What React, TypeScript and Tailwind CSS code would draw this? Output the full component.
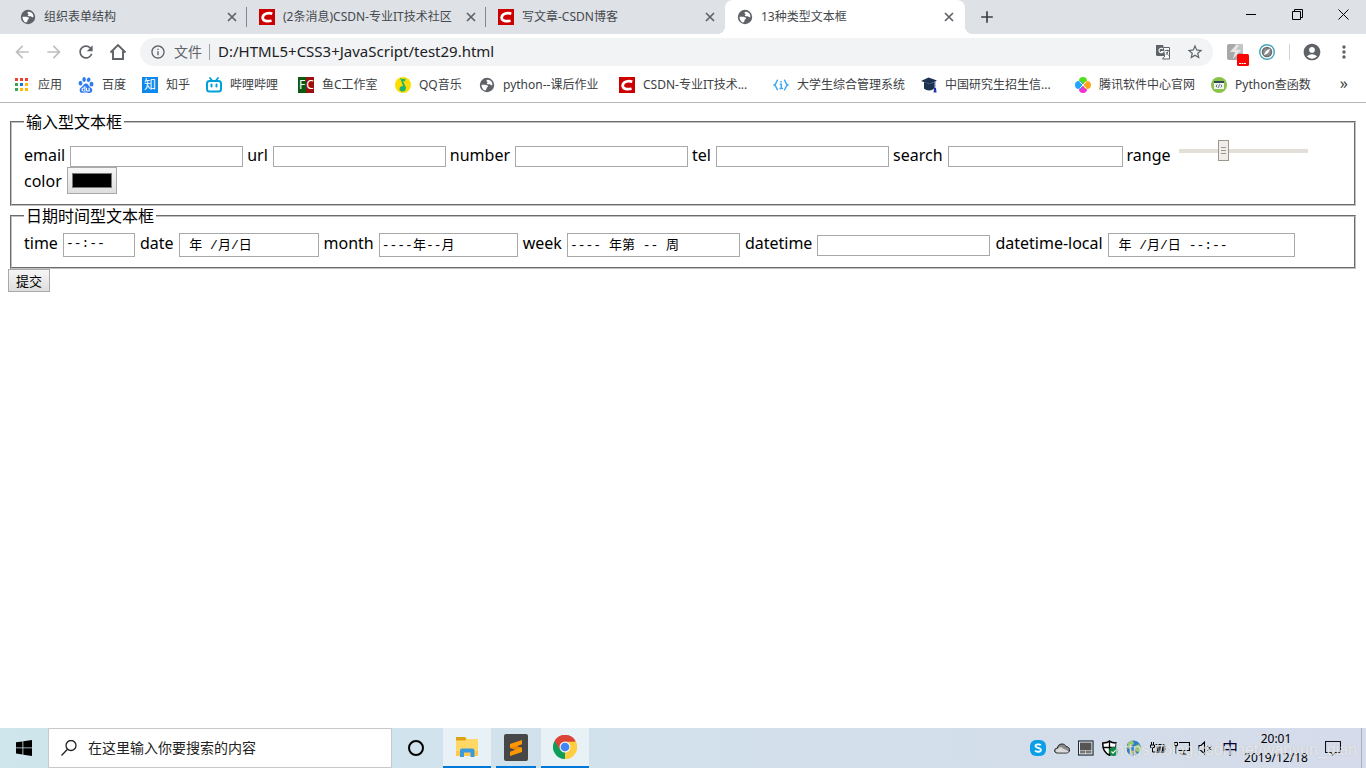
import { useState } from 'react';
import type { ReactNode } from 'react';
import { MdAccountCircle, MdAdd, MdArrowBack, MdArrowForward, MdInfoOutline, MdMoreVert, MdRefresh, MdStarBorder } from 'react-icons/md';
import { SiBaidu } from 'react-icons/si';

/* ---------- icons ---------- */

const GlobeIcon = () => (
  <svg className="size-4 shrink-0" viewBox="0 0 16 16">
    <circle cx="8" cy="8" r="7.2" fill="#5f6368" />
    <path d="M2.500 7.800h3.300c1 0 1.500.6 2.500.6s1 1 .2 1.600-1 1-1 1.800-.8 1.700-1.700 1.700C3.800 12.800 2.500 10.500 2.500 7.800zM8.500 2.800c1.800-.2 3.300.8 4.200 2.200.5.900.8 2 .7 3-.8.5-1.700.2-2.200-.4-.6-.7-1.500-.2-2.500-.3-1-.1-1.200-1.300-.4-1.700.6-.3.600-.8-.2-.9-.9-.1-1-1.500.4-1.900z" fill="#fff" />
  </svg>
);

const CsdnIcon = () => (
  <svg className="size-4 shrink-0" viewBox="0 0 16 16">
    <rect width="16" height="16" fill="#c00" />
    <path d="M13.300 4.700C10 3.700 4.300 4 3.700 8.200c-.5 4.200 5 4.400 8.900 3.500" fill="none" stroke="#fff" strokeWidth="2.700" />
  </svg>
);

const AppsIcon = () => (
  <svg className="size-4 shrink-0" viewBox="0 0 16 16">
    <path d="M1 1h3v3H1zM6 1h3v3H6zM11 1h3v3h-3z" fill="#ea4335" />
    <path d="M1 6h3v3H1zM1 11h3v3H1z" fill="#34a853" />
    <path d="M6 6h3v3H6z" fill="#1a73e8" />
    <path d="M11 6h3v3h-3zM6 11h3v3H6zM11 11h3v3h-3z" fill="#fbbc04" />
  </svg>
);

const ZhihuIcon = () => (
  <span className="flex size-4 shrink-0 items-center justify-center bg-[#0f88eb] text-xs leading-4 text-white">知</span>
);

const BilibiliIcon = () => (
  <svg className="size-4 shrink-0" viewBox="0 0 16 16" fill="none" stroke="#00a1d6" strokeWidth="2">
    <rect x="1" y="4" width="14" height="10.500" rx="2.500" />
    <path d="M4 1l2 2.500M12 1l-2 2.500" strokeWidth="1.800" strokeLinecap="round" />
    <path d="M5.500 7.500v2M10.500 7.500v2" strokeLinecap="round" />
  </svg>
);

const FishcIcon = () => (
  <span className="flex h-4 w-4 shrink-0 bg-[linear-gradient(90deg,#0c5a12_50%,#9c0f0f_50%)] text-xs leading-4 text-white">
    <span className="w-2 text-center">F</span>
    <span className="w-2 text-center">C</span>
  </span>
);

const QQMusicIcon = () => (
  <svg className="size-4 shrink-0" viewBox="0 0 16 16">
    <circle cx="8" cy="8" r="8" fill="#ffdc00" />
    <path d="M5 1c1.500.8 3.700 1.200 5.700.8L10 4.300c-.9 0-1.500-.1-2-.2l2.800 6c.8 2.600-.9 4.500-3 4.500s-3.600-1.400-3.300-3.200c.2-1.700 1.900-2.600 3.600-2.400z" fill="#1fb46f" />
  </svg>
);

const BracketIcon = () => (
  <svg className="size-4 shrink-0" viewBox="0 0 16 16" fill="none" stroke="#3da9f5" strokeWidth="1.500">
    <path d="M5 3C3 3.500 3.800 7 1.300 8 3.800 9 3 12.500 5 13M11 3c2 .5 1.200 4 3.700 5-2.500 1-1.700 4.500-3.700 5" />
    <path d="M6.800 7.200h1.500v4.300M6.500 11.500h3.500M7.300 4.700h1.500" />
  </svg>
);

const GraduationIcon = () => (
  <svg className="size-4 shrink-0" viewBox="0 0 16 16">
    <path d="M0 4l7.500-3.500L16 3.500 8.500 7z" fill="#1b3350" />
    <path d="M3 5l5.500 2 4.500-2v6.500c-1.700 2.400-7.500 2.800-10 0z" fill="#1b3350" />
    <path d="M13.800 4v8" stroke="#25368c" />
    <path d="M13 11h2l.6 4.500h-3z" fill="#2432b0" />
  </svg>
);

const TencentIcon = () => (
  <svg className="size-4 shrink-0" viewBox="0 0 16 16">
    <circle cx="8" cy="4" r="4" fill="#52e01e" />
    <circle cx="8" cy="12" r="4" fill="#f032d8" />
    <circle cx="3.900" cy="8" r="3.900" fill="#24a4ff" />
    <circle cx="12.100" cy="8" r="3.900" fill="#ffa41c" />
    <path d="M4.500 4.500l7 7M11.500 4.500l-7 7" stroke="#fff" />
  </svg>
);

const PythonDocIcon = () => (
  <svg className="size-4 shrink-0" viewBox="0 0 16 16">
    <circle cx="8" cy="8" r="8" fill="#8bc34a" />
    <rect x="3" y="4" width="10" height="8" fill="#f5f5f5" />
    <rect x="3" y="4" width="10" height="2" fill="#2e4a54" />
    <path d="M6.300 7.500L5 9l1.300 1.500M9.700 7.500L11 9l-1.300 1.500M8.500 7.300l-1 3.400" fill="none" stroke="#2e4a54" strokeWidth=".8" />
  </svg>
);

const HomeIcon = () => (
  <svg className="size-5" viewBox="0 0 20 20">
    <path d="M2.500 10.500L10 3l7.500 7.500M5 9v8h10V9" fill="none" stroke="currentColor" strokeWidth="1.900" />
  </svg>
);

const TranslateIcon = () => (
  <svg className="size-4" viewBox="0 0 16 16">
    <path d="M1 1h7l3.500 11H2.500A1.500 1.500 0 011 10.500z" fill="#5f6368" />
    <path d="M9 3.500h5.500V15H7.500l2.500-3" fill="#fff" stroke="#5f6368" />
    <path d="M8 5.200a2.200 2.200 0 10.200 2.300H6" fill="none" stroke="#fff" strokeWidth="1.100" />
    <path d="M10 6.500h4M12 5.500v1M13.200 6.500c-.3 2-1.500 3.500-2.500 4.500M11 8l2.500 3.500" fill="none" stroke="#5f6368" strokeWidth=".9" />
  </svg>
);

const FlashExtensionIcon = () => (
  <svg className="size-8" viewBox="0 0 32 32">
    <rect x="8" y="8" width="16" height="16" rx="2" fill="#a8a8a8" />
    <path d="M16 8h6a2 2 0 012 2v7h-8z" fill="#c4c4c4" />
    <path d="M17 9l-6 7h5l-2 7 8-9h-5l3-5z" fill="#e6e6e6" />
    <rect x="18" y="18" width="12" height="12" rx="1.500" fill="#f00" />
    <path d="M20 27.500h7" stroke="#fff" strokeDasharray="2 .5" />
  </svg>
);

const CompassExtensionIcon = () => (
  <svg className="size-4" viewBox="0 0 16 16">
    <circle cx="8" cy="8" r="7.300" fill="#fff" stroke="#45a5b8" strokeWidth="1.400" />
    <circle cx="8" cy="8" r="5.300" fill="#6c6c6c" />
    <circle cx="8" cy="8" r="3.800" fill="#909090" />
    <path d="M11.500 4.500L9 9l-4.500 2.500L7 7z" fill="#fff" />
  </svg>
);

const WindowsIcon = () => (
  <svg className="size-4" viewBox="0 0 16 16">
    <path d="M0 2.300l6.500-.9v6.100H0zM7.300 1.300L16 0v7.500H7.300zM0 8.300h6.500v6.200L0 13.600zM7.300 8.300H16V16l-8.700-1.300z" />
  </svg>
);

const SearchIcon = () => (
  <svg className="size-4" viewBox="0 0 16 16" fill="none" stroke="#222" strokeWidth="1.300">
    <circle cx="10" cy="5.500" r="5" />
    <path d="M6.500 9.300L.5 15.500" />
  </svg>
);

const FolderIcon = () => (
  <svg className="h-5 w-[22px]" viewBox="0 0 22 20">
    <path d="M0 0h9l1.500 2H22v17H0z" fill="#ffd868" />
    <path d="M0 0h9l1.500 2L9 3.500H0z" fill="#dba215" />
    <path d="M0 14h22v5H0z" fill="#ffc94d" />
    <path d="M4 20v-6.500a2 2 0 012-2h10.500a2 2 0 012 2V20h-4v-4.500H8V20z" fill="#3b9ade" />
  </svg>
);

const SublimeIcon = () => (
  <svg className="h-[27px] w-6" viewBox="0 0 24 27">
    <rect width="24" height="27" rx="2" fill="#474747" />
    <path d="M18 6v4.200l-5.500 2 5.500 1.600V18L6 22v-4.200l5.500-2L6 14v-4z" fill="#ff9800" />
    <path d="M6 13.500l5.500 2.300 6.500-2-5.500-1.600z" fill="#e88600" />
  </svg>
);

const ChromeIcon = () => (
  <svg className="size-6" viewBox="0 0 24 24">
    <path d="M12 12L1.600 6A12 12 0 0122.400 6z" fill="#db4437" />
    <path d="M12 12l10.400-6A12 12 0 0112 24z" fill="#ffcd40" />
    <path d="M12 12v12A12 12 0 011.600 6z" fill="#0f9d58" />
    <path d="M12 6.500h10.700A12 12 0 0112 24l4.800-9.200z" fill="#ffcd40" />
    <path d="M1.600 6A12 12 0 0122.700 6.500H12L7.200 14.800z" fill="#db4437" />
    <circle cx="12" cy="12" r="5.500" fill="#f1f1f1" />
    <circle cx="12" cy="12" r="4.300" fill="#4285f4" />
  </svg>
);

const trayIcons: { name: string; icon: ReactNode }[] = [
  {
    name: 'Skype',
    icon: (
      <>
        <rect width="16" height="16" rx="6" fill="#0a9fe6" />
        <path d="M10.800 5.300C9.800 3.900 5.500 3.900 5.500 6.100c0 2.400 5.400 1.300 5.400 3.900 0 2.200-4.600 2.300-5.800.5" fill="none" stroke="#fff" strokeWidth="1.800" />
      </>
    ),
  },
  {
    name: 'OneDrive',
    icon: (
      <>
        <path d="M3.500 13C.5 13 0 10.500 1 9.200c.6-.8 1.600-1 2.300-.9C3.800 5.500 5.500 4 8 4c2 0 3.400 1 4 2.600 2.200 0 3.600 1.500 3.600 3.200S14.300 13 12.500 13z" fill="#8b8b8b" stroke="#222" />
        <path d="M4 12.500c-3 0-3-3.500 0-3.700C5.500 6.500 8 7 9 8.500l5.500 2.800c-.3.800-1 1.200-2 1.200z" fill="#dadada" />
      </>
    ),
  },
  {
    name: 'Touchpad',
    icon: (
      <>
        <rect x=".5" y="1" width="14.500" height="14" fill="#fff" stroke="#1b2a38" strokeWidth="1.200" />
        <path d="M2 2.500h11.500v7.700H2z" fill="#555" />
        <path d="M2 10.500h5.500v3H2zM8 10.500h5.500v3H8z" fill="#777" />
      </>
    ),
  },
  {
    name: 'Security',
    icon: (
      <>
        <path d="M7.500 1C6 2.500 3 3 .8 3c-.3 6 1.700 10 6.700 12.300C12.500 13 14.500 9 14.200 3 12 3 9 2.500 7.500 1z" fill="#fff" stroke="#000" strokeWidth="1.500" />
        <path d="M7.500 1v14M1 7.500h13" stroke="#000" strokeWidth="1.300" />
        <circle cx="11.500" cy="11.500" r="4.500" fill="#10893e" />
        <path d="M9.500 11.500l1.500 1.600 2.700-3" fill="none" stroke="#fff" strokeWidth="1.200" />
      </>
    ),
  },
  {
    name: 'Network globe',
    icon: (
      <>
        <circle cx="7.500" cy="8" r="7.500" fill="#2d7fc8" />
        <path d="M2 3c2-2 4-2.500 5-2l1 3-3 2-1 3-3-1zM9 6l4-2 2 4-2 5-3-2z" fill="#9cc86a" />
        <path d="M4 10l4 1-1 4-3-2z" fill="#d6c04c" />
      </>
    ),
  },
  {
    name: 'Battery',
    icon: (
      <>
        <path d="M5.500 4.500h9v7.500H5M15.500 6.500v3.500" fill="none" stroke="#000" strokeWidth="1.200" />
        <path d="M6.500 6.500h2V11h-2zM9.300 6.500h2V11h-2zM12 6.500h1.700V11H12z" fill="#000" />
        <path d="M1.500 2v3M3.500 2v3M.5 5h4v2.500h-4zM2.500 7.500V12H5" fill="none" stroke="#000" />
      </>
    ),
  },
  {
    name: 'Ethernet',
    icon: (
      <>
        <path d="M5 2.500h10.500v8H4.500M9.500 10.500v3M6 14h7" fill="none" stroke="#000" strokeWidth="1.200" />
        <path d="M.5 2.500h3v3h-3zM2 5.500v8" fill="none" stroke="#000" />
      </>
    ),
  },
  {
    name: 'Volume',
    icon: (
      <path d="M1 5.500h2L6.500 2v12L3 10.500H1zM9.500 6l4 4.500M13.500 6l-4 4.500" fill="none" stroke="#000" strokeWidth="1.100" />
    ),
  },
];

/* ---------- browser window ---------- */

const tabs = [
  { title: '组织表单结构', icon: <GlobeIcon />, divider: true },
  { title: '(2条消息)CSDN-专业IT技术社区', icon: <CsdnIcon />, divider: true },
  { title: '写文章-CSDN博客', icon: <CsdnIcon />, divider: false },
];

const bookmarks = [
  { title: '应用', icon: <AppsIcon />, width: 'w-16' },
  { title: '百度', icon: <SiBaidu className="size-4 shrink-0 text-[#2f7bf0]" />, width: 'w-16' },
  { title: '知乎', icon: <ZhihuIcon />, width: 'w-16' },
  { title: '哔哩哔哩', icon: <BilibiliIcon />, width: 'w-[92px]' },
  { title: '鱼C工作室', icon: <FishcIcon />, width: 'w-[97px]' },
  { title: 'QQ音乐', icon: <QQMusicIcon />, width: 'w-[84px]' },
  { title: 'python--课后作业', icon: <GlobeIcon />, width: 'w-[140px]' },
  { title: 'CSDN-专业IT技术...', icon: <CsdnIcon />, width: 'w-[154px]' },
  { title: '大学生综合管理系统', icon: <BracketIcon />, width: 'w-[148px]' },
  { title: '中国研究生招生信...', icon: <GraduationIcon />, width: 'w-[154px]' },
  { title: '腾讯软件中心官网', icon: <TencentIcon />, width: 'w-[136px]' },
  { title: 'Python查函数', icon: <PythonDocIcon />, width: 'w-[104px]' },
];

function CloseTab() {
  return (
    <button type="button" aria-label="关闭标签页" className="flex size-4 shrink-0 items-center justify-center text-[#5f6368]">
      <svg className="size-2.5" viewBox="0 0 10 10"><path d="M1 1l8 8M9 1L1 9" stroke="currentColor" strokeWidth="1.700" /></svg>
    </button>
  );
}

function TabStrip() {
  return (
    <div className="flex h-[34px] bg-[#dee1e6] pl-2 text-xs text-[#45494d]">
      {tabs.map((tab) => (
        <div key={tab.title} className="flex w-[239px] items-center pl-3">
          {tab.icon}
          <span className="ml-2 flex-1 truncate">{tab.title}</span>
          <CloseTab />
          <span className={`ml-1.5 h-5 w-px ${tab.divider ? 'bg-[#80868b]' : ''}`} />
        </div>
      ))}
      <div className="relative flex w-60 items-center rounded-t-lg bg-white pr-2 pl-3">
        <span className="absolute bottom-0 -left-2 size-2 bg-[radial-gradient(circle_at_0_0,#dee1e6_8px,white_8px)]" />
        <span className="absolute -right-2 bottom-0 size-2 bg-[radial-gradient(circle_at_100%_0,#dee1e6_8px,white_8px)]" />
        <GlobeIcon />
        <span className="ml-2 flex-1 truncate">13种类型文本框</span>
        <CloseTab />
      </div>
      <button type="button" aria-label="新标签页" className="ml-3 flex w-5 items-center justify-center text-[#3c4043]">
        <MdAdd className="size-5" />
      </button>
      <div className="ml-auto flex h-7 text-black">
        <button type="button" aria-label="最小化" className="flex w-[46px] items-center justify-center">
          <svg className="size-[11px]" viewBox="0 0 11 11"><path d="M0 5.500h10" stroke="currentColor" /></svg>
        </button>
        <button type="button" aria-label="还原" className="flex w-[46px] items-center justify-center">
          <svg className="size-[11px]" viewBox="0 0 11 11" fill="none" stroke="currentColor">
            <path d="M.5 2.500h8v8h-8zM2.500 2.500v-2h8v8h-2" />
          </svg>
        </button>
        <button type="button" aria-label="关闭" className="flex w-[46px] items-center justify-center">
          <svg className="size-[11px]" viewBox="0 0 11 11"><path d="M.5.5l10 10M10.500.5l-10 10" stroke="currentColor" /></svg>
        </button>
      </div>
    </div>
  );
}

function ToolButton({ label, children }: { label: string; children: ReactNode }) {
  return (
    <button type="button" aria-label={label} className="flex w-8 shrink-0 items-center justify-center">
      {children}
    </button>
  );
}

function Toolbar() {
  return (
    <div className="flex h-9 items-stretch bg-white px-1.5 text-[#5f6368]">
      <ToolButton label="后退"><MdArrowBack className="size-5 text-[#bdbfc1]" /></ToolButton>
      <ToolButton label="前进"><MdArrowForward className="size-5 text-[#bdbfc1]" /></ToolButton>
      <ToolButton label="重新加载"><MdRefresh className="size-5" /></ToolButton>
      <ToolButton label="主页"><HomeIcon /></ToolButton>
      <div className="my-1 ml-1.5 flex flex-1 items-center rounded-full bg-[#f1f3f4] pr-0.5 pl-2.5 text-sm">
        <MdInfoOutline className="size-4" />
        <span className="ml-2">文件</span>
        <span className="ml-[7px] h-4 w-px bg-[#9aa0a6]" />
        <input
          aria-label="地址"
          defaultValue="D:/HTML5+CSS3+JavaScript/test29.html"
          className="ml-2 flex-1 bg-transparent text-[15px] text-[#202124] outline-none"
        />
        <ToolButton label="翻译此页"><TranslateIcon /></ToolButton>
        <ToolButton label="为此标签页添加书签"><MdStarBorder className="size-[18px]" /></ToolButton>
      </div>
      <div className="ml-1.5 flex">
        <ToolButton label="Flash"><FlashExtensionIcon /></ToolButton>
        <ToolButton label="Compass"><CompassExtensionIcon /></ToolButton>
        <span className="mx-1.5 h-4 w-px self-center bg-[#d0d2d5]" />
        <ToolButton label="用户"><MdAccountCircle className="size-5" /></ToolButton>
        <ToolButton label="更多"><MdMoreVert className="size-5" /></ToolButton>
      </div>
    </div>
  );
}

function BookmarkBar() {
  return (
    <nav className="flex h-[33px] items-center overflow-hidden border-b border-[#b6b6b6] bg-white pb-0.5 pl-3.5 text-xs text-[#3c4043]">
      {bookmarks.map((bookmark) => (
        <a key={bookmark.title} href="#" className={`flex shrink-0 items-center gap-2 whitespace-nowrap ${bookmark.width}`}>
          {bookmark.icon}
          {bookmark.title}
        </a>
      ))}
      <button type="button" aria-label="更多书签" className="mr-[18px] ml-auto pb-1 text-base leading-4">»</button>
    </nav>
  );
}

/* ---------- page ---------- */

function Field({ label, type = 'text', value, className }: { label: string; type?: string; value?: string; className: string }) {
  return (
    <label className="flex items-center gap-[5px]">
      <span className="pb-1 leading-4">{label}</span>
      <input
        type={type}
        defaultValue={value}
        className={`border border-[#a9a9a9] bg-white px-0.5 pb-[3px] font-['Liberation_Mono','Noto_Sans_CJK_SC',monospace] text-[13px] whitespace-pre outline-none ${className}`}
      />
    </label>
  );
}

function FormPage() {
  const [range, setRange] = useState(33);
  const [color, setColor] = useState('#000000');

  return (
    <form className="px-2 pt-[9px] text-base leading-5" onSubmit={(e) => e.preventDefault()}>
      <fieldset className="mx-0.5 border-2 border-[#c0c0c0] px-3 pt-[5px] pb-2.5 [border-style:groove]">
        <legend className="px-0.5">输入型文本框</legend>
        <div className="flex flex-wrap items-end gap-x-1">
          <Field label="email" type="email" className="h-[21px] w-[173px]" />
          <Field label="url" type="url" className="h-[21px] w-[173px]" />
          <Field label="number" type="number" className="h-[21px] w-[173px]" />
          <Field label="tel" type="tel" className="h-[21px] w-[173px]" />
          <Field label="search" type="search" className="h-[21px] w-[175px]" />
          <label className="flex items-end gap-2">
            <span className="pb-1 leading-4">range</span>
            <input
              type="range"
              value={range}
              onChange={(e) => setRange(Number(e.target.value))}
              className="mt-[3px] mb-1.5 h-[21px] w-[129px] appearance-none bg-[linear-gradient(#e3ded8,#e3ded8)] bg-[length:100%_4px] bg-center bg-no-repeat [&::-webkit-slider-thumb]:h-[21px] [&::-webkit-slider-thumb]:w-[11px] [&::-webkit-slider-thumb]:appearance-none [&::-webkit-slider-thumb]:border [&::-webkit-slider-thumb]:border-[#9d968e] [&::-webkit-slider-thumb]:bg-[#f0ede8] [&::-webkit-slider-thumb]:bg-[repeating-linear-gradient(#9d968e_0_1px,transparent_1px_3px)] [&::-webkit-slider-thumb]:bg-[length:5px_7px] [&::-webkit-slider-thumb]:bg-center [&::-webkit-slider-thumb]:bg-no-repeat"
            />
          </label>
          <label className="flex items-center gap-[5px]">
            color
            <input
              type="color"
              value={color}
              onChange={(e) => setColor(e.target.value)}
              className="h-[27px] w-[50px] border border-[#a9a9a9] bg-linear-to-b from-[#f6f6f6] to-[#dedede] px-0.5 py-px"
            />
          </label>
        </div>
      </fieldset>

      <fieldset className="mx-0.5 border-2 border-[#c0c0c0] px-3 pt-[7px] pb-2.5 [border-style:groove]">
        <legend className="px-0.5">日期时间型文本框</legend>
        <div className="flex flex-wrap items-center gap-x-[5px]">
          <Field label="time" value="--:--" className="h-6 w-[72px]" />
          <Field label="date" value=" 年 /月/日" className="h-6 w-[140px]" />
          <Field label="month" value="----年--月" className="h-6 w-[139px]" />
          <Field label="week" value="---- 年第 -- 周" className="h-6 w-[173px]" />
          <Field label="datetime" className="h-[21px] w-[173px]" />
          <Field label="datetime-local" value=" 年 /月/日 --:--" className="h-6 w-[187px]" />
        </div>
      </fieldset>

      <button type="submit" className="block h-[23px] border border-[#a9a9a9] bg-linear-to-b from-[#f6f6f6] to-[#dedede] px-[7px] text-[13px] leading-5">
        提交
      </button>
    </form>
  );
}

/* ---------- taskbar ---------- */

function Taskbar() {
  return (
    <footer className="relative flex h-10 bg-linear-to-r from-[#cfe6ed] to-[#d5dbea]">
      <button type="button" aria-label="开始" className="flex w-12 items-center justify-center"><WindowsIcon /></button>
      <label className="flex w-[344px] items-center border border-[#c8c8c8] bg-white pl-3">
        <SearchIcon />
        <input
          aria-label="搜索"
          placeholder="在这里输入你要搜索的内容"
          className="ml-[11px] flex-1 bg-transparent text-sm outline-none placeholder:text-[#222]"
        />
      </label>
      <button type="button" aria-label="Cortana" className="flex w-12 items-center justify-center">
        <span className="size-4 rounded-full border-2 border-black" />
      </button>
      <button type="button" aria-label="文件资源管理器" className="ml-[3px] flex w-12 items-center justify-center border-b-2 border-[#0078d7] bg-[#e8f2f6]"><FolderIcon /></button>
      <button type="button" aria-label="Sublime Text" className="mx-[5px] flex w-10 items-center justify-center border-b-2 border-[#0078d7]"><SublimeIcon /></button>
      <button type="button" aria-label="Chrome" className="flex w-12 items-center justify-center border-b-2 border-[#0078d7] bg-[#e8f2f6]"><ChromeIcon /></button>

      <div className="ml-auto flex items-center gap-2">
        {trayIcons.map((item) => (
          <button key={item.name} type="button" aria-label={item.name}>
            <svg className="size-4" viewBox="0 0 16 16">{item.icon}</svg>
          </button>
        ))}
        <button type="button" aria-label="输入法" className="w-4 text-base leading-5 text-[#000030]">中</button>
      </div>
      <div className="ml-1 w-[68px] self-center text-center text-xs leading-[19px] text-black">
        <p>20:01</p>
        <p>2019/12/18</p>
      </div>
      <button type="button" aria-label="通知" className="mr-[19px] ml-3.5 flex w-[18px] items-center justify-center">
        <svg className="size-4" viewBox="0 0 16 16"><path d="M.5 1.500h15v11H10l-2 2.500-2-2.500H.5z" fill="none" stroke="#111" strokeWidth="1.100" /></svg>
      </button>
      <span className="mr-1 w-px bg-[#a9b2be]" />
      <span className="pointer-events-none absolute right-[9px] bottom-1.5 font-['Liberation_Sans',sans-serif] text-base leading-6 text-white/70 [text-shadow:0_0_1px_#8888]">
        https://blog.csdn.net/wanyun_qian
      </span>
    </footer>
  );
}

export default function App() {
  return (
    <div className="flex min-h-screen flex-col bg-white font-['Noto_Sans','Noto_Sans_CJK_SC',sans-serif] text-black">
      <header>
        <TabStrip />
        <Toolbar />
        <BookmarkBar />
      </header>
      <main className="flex-1">
        <FormPage />
      </main>
      <Taskbar />
    </div>
  );
}
